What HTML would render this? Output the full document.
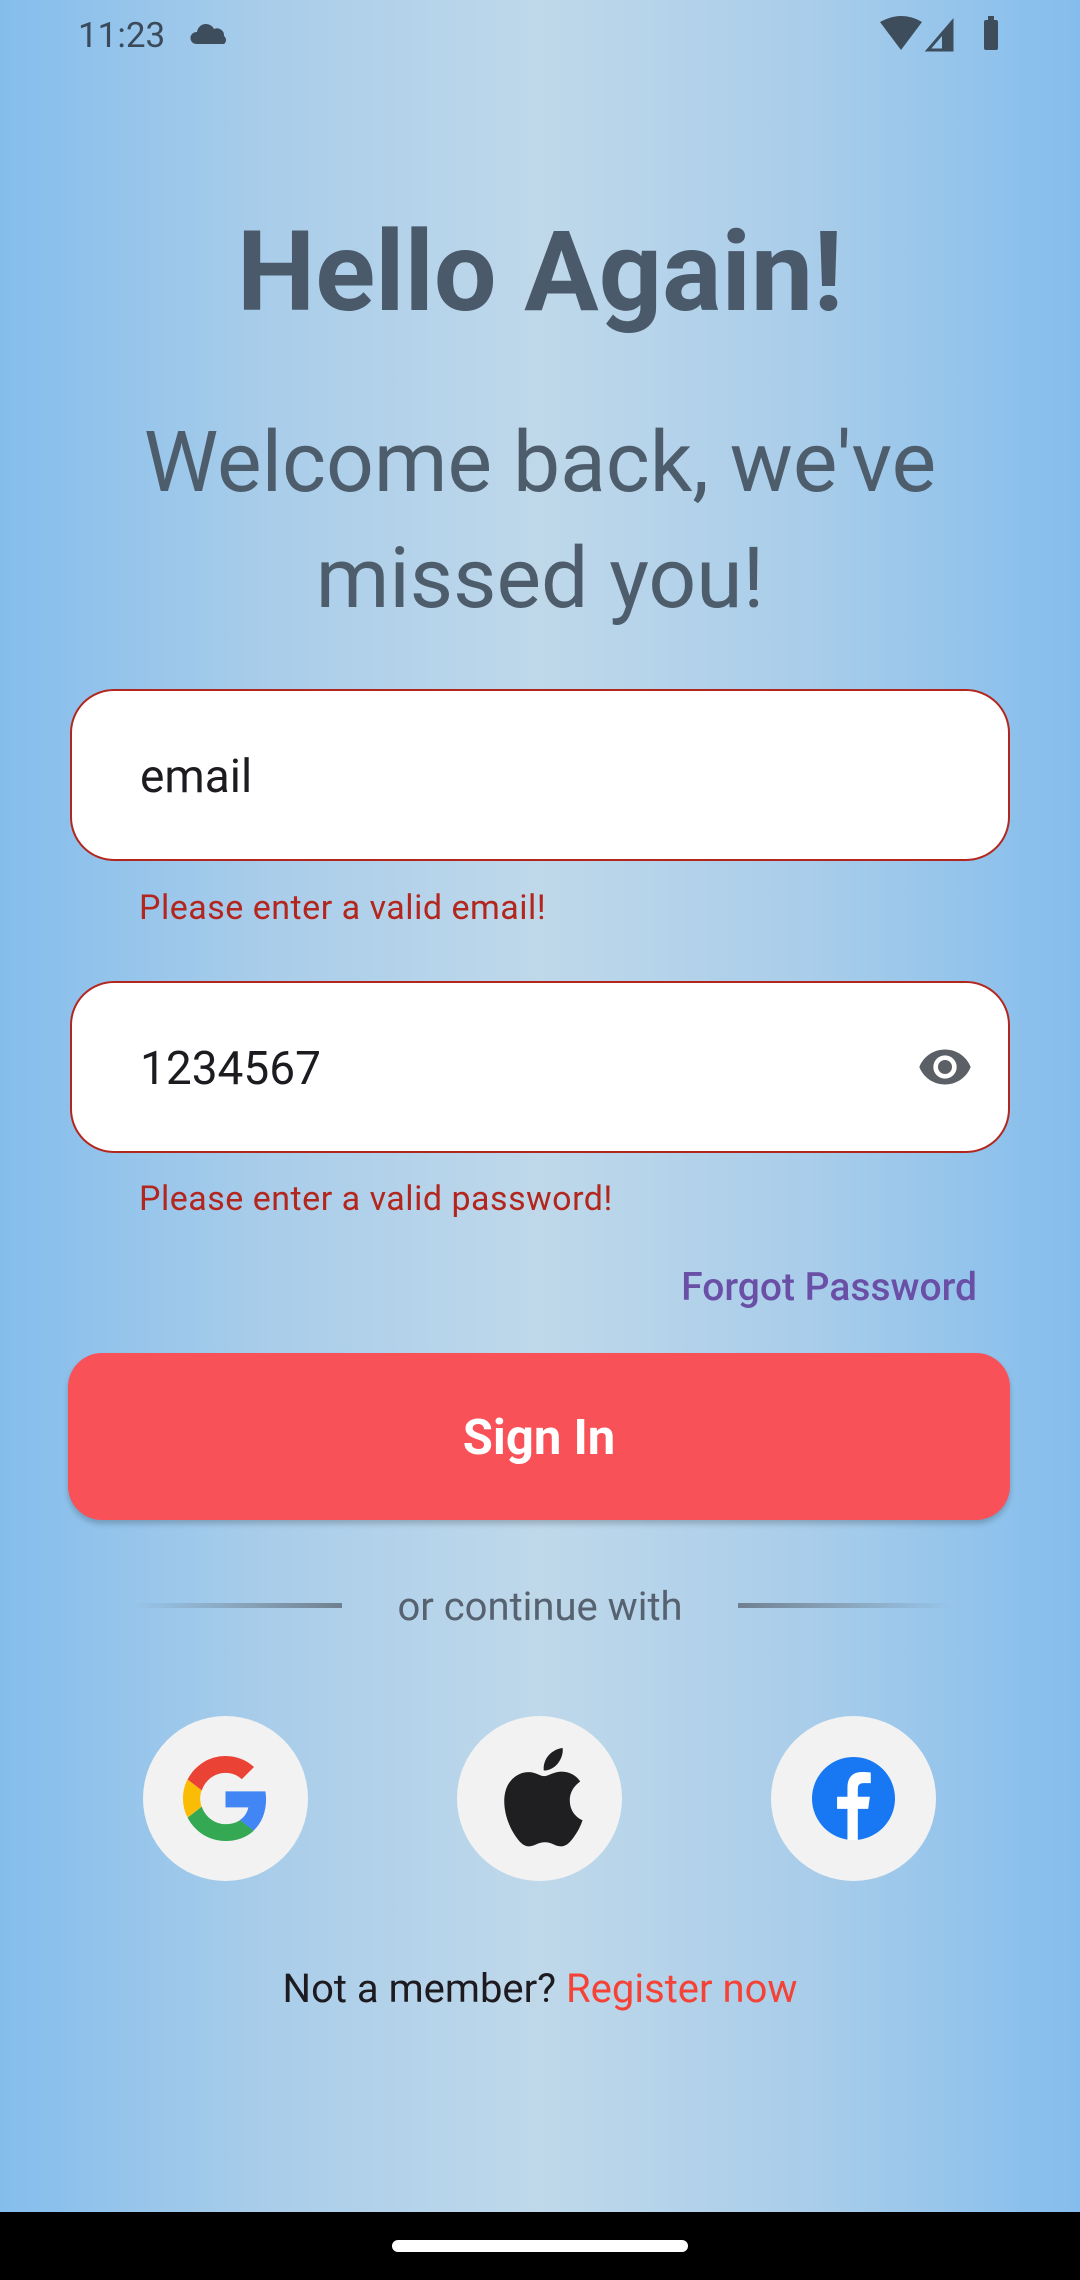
<!DOCTYPE html>
<html><head><meta charset="utf-8"><style>
*{margin:0;padding:0;box-sizing:border-box}
body{width:1080px;height:2280px;position:relative;overflow:hidden;font-family:"Roboto","Liberation Sans",sans-serif;background:linear-gradient(90deg,#84bdec 0%,#a9cdea 25%,#bfd8ea 50%,#a9cdea 75%,#84bdec 100%)}
.a{position:absolute}
.field{position:absolute;left:70px;width:940px;height:172px;background:#fff;border:2px solid #b3261e;border-radius:44px}
.ft{position:absolute;left:68px;top:2px;line-height:168px;font-size:46px;color:#1d1b20}
.err{position:absolute;left:139px;font-size:34px;color:#b3261e;letter-spacing:.5px}
.circ{position:absolute;top:1716px;width:165px;height:165px;border-radius:50%;background:#f2f2f2}
</style></head><body>
<div class="a" style="left:78px;top:14px;font-size:35px;color:#3a4a5a;line-height:44px">11:23</div>
<svg class="a" style="left:190px;top:22px" width="40" height="24" viewBox="0 0 40 24"><path d="M6 22a6 6 0 0 1 1-12 9 9 0 0 1 17-3 7 7 0 0 1 10 7 5 5 0 0 1 0 8z" fill="#3d4d5c"/></svg>
<svg class="a" style="left:880px;top:16px" width="126" height="36" viewBox="0 0 126 36"><path d="M0 6Q22 -6 42 6L21 34z" fill="#3d4d5c"/><path d="M48 34L72 6V34z" fill="none" stroke="#3d4d5c" stroke-width="3"/><path d="M62 34V18L72 8V34z" fill="#3d4d5c"/><rect x="104" y="4" width="14" height="30" rx="2" fill="#3d4d5c"/><rect x="108" y="0" width="6" height="5" fill="#3d4d5c"/></svg>
<div class="a" style="left:0;width:1080px;top:198px;text-align:center;font-size:111px;font-weight:bold;color:#4a5a6a;line-height:150px">Hello Again!</div>
<div class="a" style="left:0;width:1080px;top:405px;text-align:center;font-size:84px;color:#4e5d6c;line-height:116px">Welcome back, we've<br>missed you!</div>
<div class="field" style="top:689px"><div class="ft">email</div></div>
<div class="err" style="top:888px">Please enter a valid email!</div>
<div class="field" style="top:981px"><div class="ft">1234567</div>
<svg class="a" style="left:842px;top:56px" width="62" height="56" viewBox="0 0 24 24"><path d="M12 4.5C7 4.5 2.7 7.6 1 12c1.7 4.4 6 7.5 11 7.5s9.3-3.1 11-7.5c-1.7-4.4-6-7.5-11-7.5zM12 17a5 5 0 1 1 0-10 5 5 0 0 1 0 10zm0-8a3 3 0 1 0 0 6 3 3 0 0 0 0-6z" fill="#5b5f66"/></svg></div>
<div class="err" style="top:1179px">Please enter a valid password!</div>
<div class="a" style="right:103px;top:1264px;font-size:39px;font-weight:500;color:#6a4fa6">Forgot Password</div>
<div class="a" style="left:68px;top:1353px;width:942px;height:167px;border-radius:34px;background:#f85157;box-shadow:0 4px 6px rgba(0,0,0,.2);color:#fff;font-size:49px;font-weight:bold;text-align:center;line-height:170px">Sign In</div>
<div class="a" style="left:131px;top:1603px;width:211px;height:5px;background:linear-gradient(90deg,rgba(90,110,125,0),#6e8090)"></div>
<div class="a" style="left:738px;top:1603px;width:214px;height:5px;background:linear-gradient(90deg,#6e8090,rgba(90,110,125,0))"></div>
<div class="a" style="left:0;width:1080px;top:1583px;text-align:center;font-size:40px;color:#566270">or continue with</div>
<div class="circ" style="left:143px"><svg class="a" style="left:40px;top:40px" width="85" height="85" viewBox="0 0 48 48"><path fill="#EA4335" d="M24 9.5c3.5 0 6.7 1.2 9.2 3.6l6.9-6.9C35.9 2.4 30.5 0 24 0 14.6 0 6.6 5.4 2.6 13.3l8 6.2C12.5 13.7 17.8 9.5 24 9.5z"/><path fill="#4285F4" d="M46.9 24.5c0-1.6-.1-3.1-.4-4.5H24v9h12.9c-.6 3-2.3 5.5-4.8 7.2l7.7 6c4.5-4.2 7.1-10.3 7.1-17.7z"/><path fill="#FBBC05" d="M10.5 28.6c-.5-1.4-.8-3-.8-4.6s.3-3.2.8-4.6l-8-6.2C.9 16.5 0 20.1 0 24s.9 7.5 2.6 10.7l7.9-6.1z"/><path fill="#34A853" d="M24 48c6.5 0 11.9-2.1 15.9-5.8l-7.7-6c-2.2 1.5-4.9 2.3-8.2 2.3-6.2 0-11.5-4.2-13.4-9.9l-8 6.2C6.6 42.6 14.6 48 24 48z"/></svg></div>
<div class="circ" style="left:457px"><svg class="a" style="left:40px;top:30px" width="88" height="104" viewBox="1.5 0.5 22 25.5" preserveAspectRatio="none"><path fill="#1f1e21" d="M19.7 13.8c0-3 2.5-4.5 2.6-4.6-1.4-2.1-3.6-2.4-4.4-2.4-1.9-.2-3.6 1.1-4.6 1.1-1 0-2.4-1.1-4-1-2 0-3.900 1.200-5 3-2.100 3.700-.500 9.200 1.500 12.200 1 1.500 2.200 3.100 3.800 3 1.500-.100 2.100-1 3.900-1s2.400 1 4 1c1.600 0 2.700-1.500 3.700-3 1.200-1.700 1.600-3.300 1.700-3.400-.100 0-3.200-1.200-3.200-4.900zM16.700 4.800c.800-1 1.400-2.400 1.200-3.800-1.200.100-2.600.800-3.500 1.800-.800.900-1.400 2.300-1.200 3.700 1.300.100 2.700-.700 3.500-1.700z"/></svg></div>
<div class="circ" style="left:771px"><svg class="a" style="left:41px;top:41px" width="83" height="83" viewBox="0 0 48 48"><circle cx="24" cy="24" r="24" fill="#1877f2"/><path fill="#fff" d="M26.5 48V30h6l1-7h-7v-4.5c0-2 .6-3.400 3.500-3.400H34V9c-.6-.1-2.800-.3-5.200-.3-5.200 0-8.300 3.100-8.300 8.800V23h-6v7h6v18z"/></svg></div>
<div class="a" style="left:0;width:1080px;top:1965px;text-align:center;font-size:40px;color:#1d1b20">Not a member? <span style="color:#f44336">Register now</span></div>
<div class="a" style="left:0;top:2212px;width:1080px;height:68px;background:#000"></div>
<div class="a" style="left:392px;top:2240px;width:296px;height:12px;border-radius:6px;background:#fff"></div>
</body></html>
